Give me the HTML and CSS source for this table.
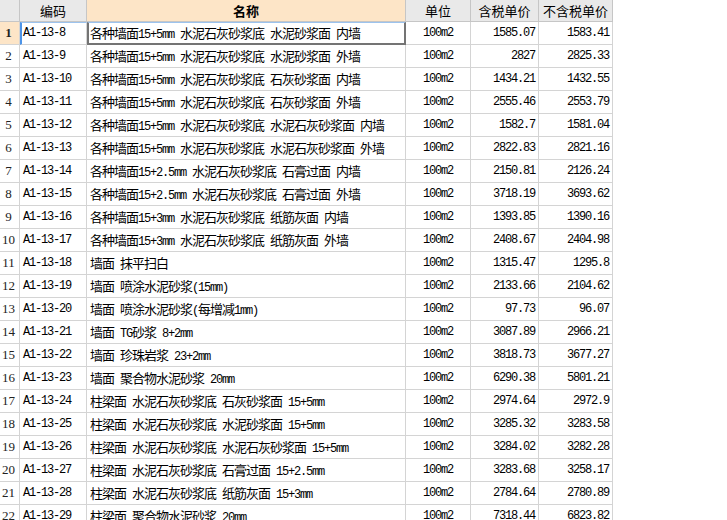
FILE: index.html
```html
<!DOCTYPE html>
<html>
<head>
<meta charset="utf-8">
<link rel="stylesheet" href="styles.css">
</head>
<body>
<div class="grid">
  <div class="hd rn"></div>
  <div class="hd">编码</div>
  <div class="hd hl">名称</div>
  <div class="hd">单位</div>
  <div class="hd">含税单价</div>
  <div class="hd">不含税单价</div>

  <div class="c rn sel">1</div><div class="c code selcode">A1-13-8</div><div class="c name selname">各种墙面<span class="a">15+5mm </span>水泥石灰砂浆底<span class="a"> </span>水泥砂浆面<span class="a"> </span>内墙</div><div class="c unit">100m2</div><div class="c num">1585.07</div><div class="c num">1583.41</div>
  <div class="c rn">2</div><div class="c code">A1-13-9</div><div class="c name">各种墙面<span class="a">15+5mm </span>水泥石灰砂浆底<span class="a"> </span>水泥砂浆面<span class="a"> </span>外墙</div><div class="c unit">100m2</div><div class="c num">2827</div><div class="c num">2825.33</div>
  <div class="c rn">3</div><div class="c code">A1-13-10</div><div class="c name">各种墙面<span class="a">15+5mm </span>水泥石灰砂浆底<span class="a"> </span>石灰砂浆面<span class="a"> </span>内墙</div><div class="c unit">100m2</div><div class="c num">1434.21</div><div class="c num">1432.55</div>
  <div class="c rn">4</div><div class="c code">A1-13-11</div><div class="c name">各种墙面<span class="a">15+5mm </span>水泥石灰砂浆底<span class="a"> </span>石灰砂浆面<span class="a"> </span>外墙</div><div class="c unit">100m2</div><div class="c num">2555.46</div><div class="c num">2553.79</div>
  <div class="c rn">5</div><div class="c code">A1-13-12</div><div class="c name">各种墙面<span class="a">15+5mm </span>水泥石灰砂浆底<span class="a"> </span>水泥石灰砂浆面<span class="a"> </span>内墙</div><div class="c unit">100m2</div><div class="c num">1582.7</div><div class="c num">1581.04</div>
  <div class="c rn">6</div><div class="c code">A1-13-13</div><div class="c name">各种墙面<span class="a">15+5mm </span>水泥石灰砂浆底<span class="a"> </span>水泥石灰砂浆面<span class="a"> </span>外墙</div><div class="c unit">100m2</div><div class="c num">2822.83</div><div class="c num">2821.16</div>
  <div class="c rn">7</div><div class="c code">A1-13-14</div><div class="c name">各种墙面<span class="a">15+2.5mm </span>水泥石灰砂浆底<span class="a"> </span>石膏过面<span class="a"> </span>内墙</div><div class="c unit">100m2</div><div class="c num">2150.81</div><div class="c num">2126.24</div>
  <div class="c rn">8</div><div class="c code">A1-13-15</div><div class="c name">各种墙面<span class="a">15+2.5mm </span>水泥石灰砂浆底<span class="a"> </span>石膏过面<span class="a"> </span>外墙</div><div class="c unit">100m2</div><div class="c num">3718.19</div><div class="c num">3693.62</div>
  <div class="c rn">9</div><div class="c code">A1-13-16</div><div class="c name">各种墙面<span class="a">15+3mm </span>水泥石灰砂浆底<span class="a"> </span>纸筋灰面<span class="a"> </span>内墙</div><div class="c unit">100m2</div><div class="c num">1393.85</div><div class="c num">1390.16</div>
  <div class="c rn">10</div><div class="c code">A1-13-17</div><div class="c name">各种墙面<span class="a">15+3mm </span>水泥石灰砂浆底<span class="a"> </span>纸筋灰面<span class="a"> </span>外墙</div><div class="c unit">100m2</div><div class="c num">2408.67</div><div class="c num">2404.98</div>
  <div class="c rn">11</div><div class="c code">A1-13-18</div><div class="c name">墙面<span class="a"> </span>抹平扫白</div><div class="c unit">100m2</div><div class="c num">1315.47</div><div class="c num">1295.8</div>
  <div class="c rn">12</div><div class="c code">A1-13-19</div><div class="c name">墙面<span class="a"> </span>喷涂水泥砂浆<span class="a">(15mm)</span></div><div class="c unit">100m2</div><div class="c num">2133.66</div><div class="c num">2104.62</div>
  <div class="c rn">13</div><div class="c code">A1-13-20</div><div class="c name">墙面<span class="a"> </span>喷涂水泥砂浆<span class="a">(</span>每增减<span class="a">1mm)</span></div><div class="c unit">100m2</div><div class="c num">97.73</div><div class="c num">96.07</div>
  <div class="c rn">14</div><div class="c code">A1-13-21</div><div class="c name">墙面<span class="a"> TG</span>砂浆<span class="a"> 8+2mm</span></div><div class="c unit">100m2</div><div class="c num">3087.89</div><div class="c num">2966.21</div>
  <div class="c rn">15</div><div class="c code">A1-13-22</div><div class="c name">墙面<span class="a"> </span>珍珠岩浆<span class="a"> 23+2mm</span></div><div class="c unit">100m2</div><div class="c num">3818.73</div><div class="c num">3677.27</div>
  <div class="c rn">16</div><div class="c code">A1-13-23</div><div class="c name">墙面<span class="a"> </span>聚合物水泥砂浆<span class="a"> 20mm</span></div><div class="c unit">100m2</div><div class="c num">6290.38</div><div class="c num">5801.21</div>
  <div class="c rn">17</div><div class="c code">A1-13-24</div><div class="c name">柱梁面<span class="a"> </span>水泥石灰砂浆底<span class="a"> </span>石灰砂浆面<span class="a"> 15+5mm</span></div><div class="c unit">100m2</div><div class="c num">2974.64</div><div class="c num">2972.9</div>
  <div class="c rn">18</div><div class="c code">A1-13-25</div><div class="c name">柱梁面<span class="a"> </span>水泥石灰砂浆底<span class="a"> </span>水泥砂浆面<span class="a"> 15+5mm</span></div><div class="c unit">100m2</div><div class="c num">3285.32</div><div class="c num">3283.58</div>
  <div class="c rn">19</div><div class="c code">A1-13-26</div><div class="c name">柱梁面<span class="a"> </span>水泥石灰砂浆底<span class="a"> </span>水泥石灰砂浆面<span class="a"> 15+5mm</span></div><div class="c unit">100m2</div><div class="c num">3284.02</div><div class="c num">3282.28</div>
  <div class="c rn">20</div><div class="c code">A1-13-27</div><div class="c name">柱梁面<span class="a"> </span>水泥石灰砂浆底<span class="a"> </span>石膏过面<span class="a"> 15+2.5mm</span></div><div class="c unit">100m2</div><div class="c num">3283.68</div><div class="c num">3258.17</div>
  <div class="c rn">21</div><div class="c code">A1-13-28</div><div class="c name">柱梁面<span class="a"> </span>水泥石灰砂浆底<span class="a"> </span>纸筋灰面<span class="a"> 15+3mm</span></div><div class="c unit">100m2</div><div class="c num">2784.64</div><div class="c num">2780.89</div>
  <div class="c rn">22</div><div class="c code">A1-13-29</div><div class="c name">柱梁面<span class="a"> </span>聚合物水泥砂浆<span class="a"> 20mm</span></div><div class="c unit">100m2</div><div class="c num">7318.44</div><div class="c num">6823.82</div>
</div>
</body>
</html>
```
FILE: styles.css
```css
html, body {
  margin: 0;
  padding: 0;
  background: #ffffff;
  overflow: hidden;
}
.grid {
  display: grid;
  grid-template-columns: 20px 67px 319px 65px 68px 74px;
  grid-template-rows: 22px;
  grid-auto-rows: 23px;
  width: 613px;
  font-family: "Noto Sans CJK SC", sans-serif;
  font-size: 12px;
  color: #000;
}
.hd {
  box-sizing: border-box;
  background: #e9e9e9;
  border-right: 1px solid #c6c6c6;
  border-bottom: 1px solid #c6c6c6;
  text-align: center;
  font-size: 13px;
  line-height: 21px;
  white-space: nowrap;
}
.hd.hl {
  background: #fde5c7;
  font-weight: bold;
}
.c {
  box-sizing: border-box;
  border-right: 1px solid #d4d4d4;
  border-bottom: 1px solid #d4d4d4;
  white-space: pre;
  overflow: hidden;
  line-height: 22px;
}
.a, .code, .unit, .num {
  font-family: "Liberation Mono", monospace;
  font-size: 12px;
  letter-spacing: -1.2px;
}
.rn {
  text-align: center;
  padding-right: 2px;
  font-family: "Liberation Serif", serif;
  font-size: 13px;
  letter-spacing: 0;
  color: #222;
}
.rn.sel {
  background: #fde5c7;
  font-weight: bold;
}
.code {
  padding-left: 3px;
}
.name {
  padding-left: 3px;
  font-size: 13px;
  letter-spacing: -1px;
}
.name .a {
  font-size: 12px;
  letter-spacing: -1.2px;
}
.unit {
  text-align: center;
}
.num {
  text-align: right;
  padding-right: 3px;
}
.selcode {
  border-left: 2px solid #4d94e8;
  border-top: 1px solid #9cc3ee;
  padding-left: 1px;
  line-height: 21px;
}
.selname {
  border: 2px solid #747474;
  border-top: 1px solid #9cc3ee;
  padding-left: 1px;
  line-height: 20px;
}
```
